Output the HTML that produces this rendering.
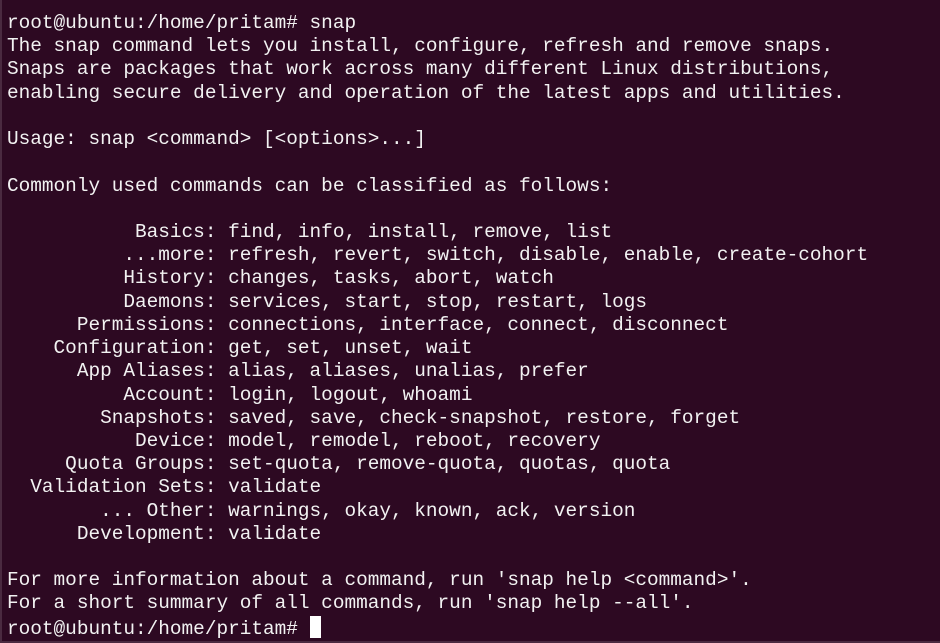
<!DOCTYPE html>
<html><head><meta charset="utf-8"><style>
html,body{margin:0;padding:0;}
body{width:940px;height:643px;background:#2d0922;overflow:hidden;position:relative;}
pre{margin:0;position:absolute;left:7px;top:12px;font-family:"Liberation Mono",monospace;font-size:19.4px;line-height:23.22px;color:#f2f2f2;white-space:pre;}
.cur{display:inline-block;width:11px;height:22px;background:#fff;vertical-align:-4px;}
.l{position:absolute;left:0;top:0;width:2px;height:643px;background:#4a2a40;}
.b{position:absolute;left:0;bottom:0;width:940px;height:2px;background:#4a2a40;}
</style></head><body><div class="l"></div><div class="b"></div><pre>root@ubuntu:/home/pritam# snap
The snap command lets you install, configure, refresh and remove snaps.
Snaps are packages that work across many different Linux distributions,
enabling secure delivery and operation of the latest apps and utilities.

Usage: snap &lt;command&gt; [&lt;options&gt;...]

Commonly used commands can be classified as follows:

           Basics: find, info, install, remove, list
          ...more: refresh, revert, switch, disable, enable, create-cohort
          History: changes, tasks, abort, watch
          Daemons: services, start, stop, restart, logs
      Permissions: connections, interface, connect, disconnect
    Configuration: get, set, unset, wait
      App Aliases: alias, aliases, unalias, prefer
          Account: login, logout, whoami
        Snapshots: saved, save, check-snapshot, restore, forget
           Device: model, remodel, reboot, recovery
     Quota Groups: set-quota, remove-quota, quotas, quota
  Validation Sets: validate
        ... Other: warnings, okay, known, ack, version
      Development: validate

For more information about a command, run 'snap help &lt;command&gt;'.
For a short summary of all commands, run 'snap help --all'.
root@ubuntu:/home/pritam# <span class="cur"></span></pre></body></html>
